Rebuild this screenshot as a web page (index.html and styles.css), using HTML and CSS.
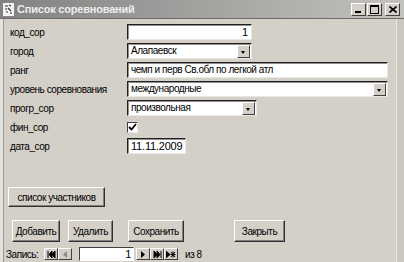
FILE: index.html
```html
<!DOCTYPE html>
<html>
<head>
<meta charset="utf-8"/>
    <title>Список соревнований</title>
    <link rel="stylesheet" href="styles.css">
</head>
<body>
<div class="window">
    <div class="titlebar">
        <svg class="appicon" width="11" height="13" viewBox="0 0 11 13">
            <rect x="0" y="0" width="11" height="13" fill="#f4f4f4"/>
            <path d="M2 3h3M6 2l2 1M2 6h2M5 5l3 3M3 9h2M7 10h2" stroke="#303030" stroke-width="1.2"/>
        </svg>
        <span class="title">Список соревнований</span>
        <span class="ctl"><span class="ctl-min"></span></span>
        <span class="ctl"><span class="ctl-max"></span></span>
        <span class="ctl ctl-close">
            <svg width="8" height="7" viewBox="0 0 8 7"><path d="M0.5 0.5l7 6M7.5 0.5l-7 6" stroke="#000" stroke-width="1.6"/></svg>
        </span>
    </div>
    <div class="body">
        <div class="form">
            <div class="row">
                <span class="label">код_сор</span>
                <div class="field w124 num">1</div>
            </div>
            <div class="row">
                <span class="label">город</span>
                <div class="field combo w124"><span class="val">Алапаевск</span><span class="drop"></span></div>
            </div>
            <div class="row">
                <span class="label">ранг</span>
                <div class="field w260">чемп и перв Св.обл по легкой атл</div>
            </div>
            <div class="row">
                <span class="label">уровень соревнования</span>
                <div class="field combo w260"><span class="val">международные</span><span class="drop"></span></div>
            </div>
            <div class="row">
                <span class="label">прогр_сор</span>
                <div class="field combo w129"><span class="val">произвольная</span><span class="drop"></span></div>
            </div>
            <div class="row">
                <span class="label">фин_сор</span>
                <div class="check">
                    <svg width="9" height="9" viewBox="0 0 9 9"><path d="M1 4l2.5 2.5L8 1" fill="none" stroke="#000" stroke-width="1.8"/></svg>
                </div>
            </div>
            <div class="row">
                <span class="label">дата_сор</span>
                <div class="field w59 num">11.11.2009</div>
            </div>
        </div>

        <div class="sub">
            <div class="btn btn-list">список участников</div>
        </div>

        <div class="actions">
            <div class="btn btn-add">Добавить</div>
            <div class="btn btn-del">Удалить</div>
            <div class="btn btn-save">Сохранить</div>
            <div class="btn btn-close">Закрыть</div>
        </div>

        <div class="nav">
            <span class="nav-label">Запись:</span>
            <span class="nbtn nb-first">
                <svg width="9" height="7" viewBox="0 0 9 7"><path d="M1 0v7M2 3.5L5 0v7zM5 3.5L8 0v7z" fill="#000" stroke="#000" stroke-width="1"/></svg>
            </span>
            <span class="nbtn nb-prev">
                <svg width="4" height="7" viewBox="0 0 4 7"><path d="M0 3.5L4 0v7z" fill="#8a8a8a"/></svg>
            </span>
            <span class="nfield">1</span>
            <span class="nbtn nb-next">
                <svg width="4" height="7" viewBox="0 0 4 7"><path d="M4 3.5L0 0v7z" fill="#000"/></svg>
            </span>
            <span class="nbtn">
                <svg width="9" height="7" viewBox="0 0 9 7"><path d="M8 0v7M7 3.5L4 0v7zM4 3.5L1 0v7z" fill="#000" stroke="#000" stroke-width="1"/></svg>
            </span>
            <span class="nbtn">
                <svg width="10" height="7" viewBox="0 0 10 7"><path d="M4 3.5L0 0v7zM5 1l4 5M9 1l-4 5M4.5 3.5h5M7 0.5v6" fill="#000" stroke="#000" stroke-width="1"/></svg>
            </span>
            <span class="nav-total">из 8</span>
        </div>
    </div>
</div>
</body>
</html>
```

FILE: styles.css
```css
html, body { margin: 0; padding: 0; }
body { width: 404px; height: 262px; overflow: hidden; background: #d4d0c8;
    font-family: "Liberation Sans", Arial, sans-serif; font-size: 10px; letter-spacing: -0.45px; color: #000; }

.window { height: 262px; display: flex; flex-direction: column; }

/* title bar (inactive window) */
.titlebar { height: 19px; display: flex; align-items: center; padding: 0 4px 0 3px;
    background: linear-gradient(to right, #828282, #c4c2bd); border-bottom: 1px solid #6e6c68; }
.appicon { display: block; margin-right: 3px; }
.title { flex: 1; color: #eeeeee; font-size: 11px; font-weight: bold; letter-spacing: -0.2px; }
.ctl { width: 13px; height: 11px; margin-left: 1px; background: #d4d0c8;
    border: 1px solid; border-color: #fff #404040 #404040 #fff; display: flex; align-items: center; justify-content: center; }
.ctl-close { margin-left: 3px; }
.ctl-min { width: 6px; height: 2px; background: #000; margin-top: 6px; margin-right: 2px; }
.ctl-max { width: 7px; height: 6px; border: 1px solid #000; border-top-width: 2px; }

.body { flex: 1; border-left: 3px solid #e4e2dc; border-right: 7px solid #cbc8c0;
    box-shadow: inset 1px 0 #9c9a94, inset -1px 0 #eceae4; padding-top: 5px; }

/* form */
.form { display: flex; flex-direction: column; gap: 3px; }
.row { height: 16px; display: flex; align-items: center; }
.label { width: 124px; padding-left: 7px; box-sizing: border-box; }
.field { height: 16px; box-sizing: border-box; background: #fff; border: 1px solid;
    border-color: #202020 #e8e8e8 #e8e8e8 #202020; box-shadow: inset 1px 1px #909090;
    padding: 0 3px; line-height: 14px; white-space: nowrap; overflow: hidden; }
.num { text-align: right; font-size: 11px; letter-spacing: -0.2px; }
.w124 { width: 125px; }
.w260 { width: 261px; }
.w129 { width: 130px; }
.w59 { width: 59px; }
.combo { display: flex; padding-right: 1px; }
.combo .val { flex: 1; }
.drop { width: 11px; height: 11px; margin-top: 1px; background: #d4d0c8; border: 1px solid;
    border-color: #fff #404040 #404040 #fff; position: relative; }
.drop::after { content: ""; position: absolute; left: 3px; top: 5px; border: 2px solid transparent;
    border-top: 3px solid #000; border-bottom: 0; }
.check { width: 11px; height: 11px; box-sizing: border-box; background: #fff; border: 1px solid;
    border-color: #404040 #e8e8e8 #e8e8e8 #404040; display: flex; align-items: center; justify-content: center; }

/* buttons */
.btn { height: 20px; box-sizing: border-box; display: flex; align-items: center; justify-content: center;
    border: 1px solid; border-color: #fff #303030 #303030 #fff; box-shadow: inset -1px -1px #808080;
    background: #d4d0c8; font-size: 10px; }
.sub { padding: 33px 0 0 5px; }
.btn-list { width: 97px; }
.actions { display: flex; padding: 13px 0 0 9px; height: 22px; }
.actions .btn { height: 22px; }
.btn-add { width: 48px; }
.btn-del { width: 45px; margin-left: 8px; }
.btn-save { width: 56px; margin-left: 15px; }
.btn-close { width: 51px; margin-left: 50px; }

/* record navigation */
.nav { display: flex; align-items: center; height: 16px; margin-top: 4px; padding-left: 3px; }
.nav-label { width: 38px; }
.nbtn { width: 14px; height: 12px; box-sizing: border-box; display: flex; align-items: center; justify-content: center;
    border: 1px solid; border-color: #fff #404040 #404040 #fff; background: #d4d0c8; }
.nb-prev { margin-right: 7px; }
.nfield { width: 55px; height: 14px; box-sizing: border-box; background: #fff; text-align: right; padding-right: 2px;
    border: 1px solid; border-color: #404040 #fff #fff #404040; line-height: 12px; font-size: 11px; margin-right: 2px; }
.nav-total { margin-left: 7px; }
```
